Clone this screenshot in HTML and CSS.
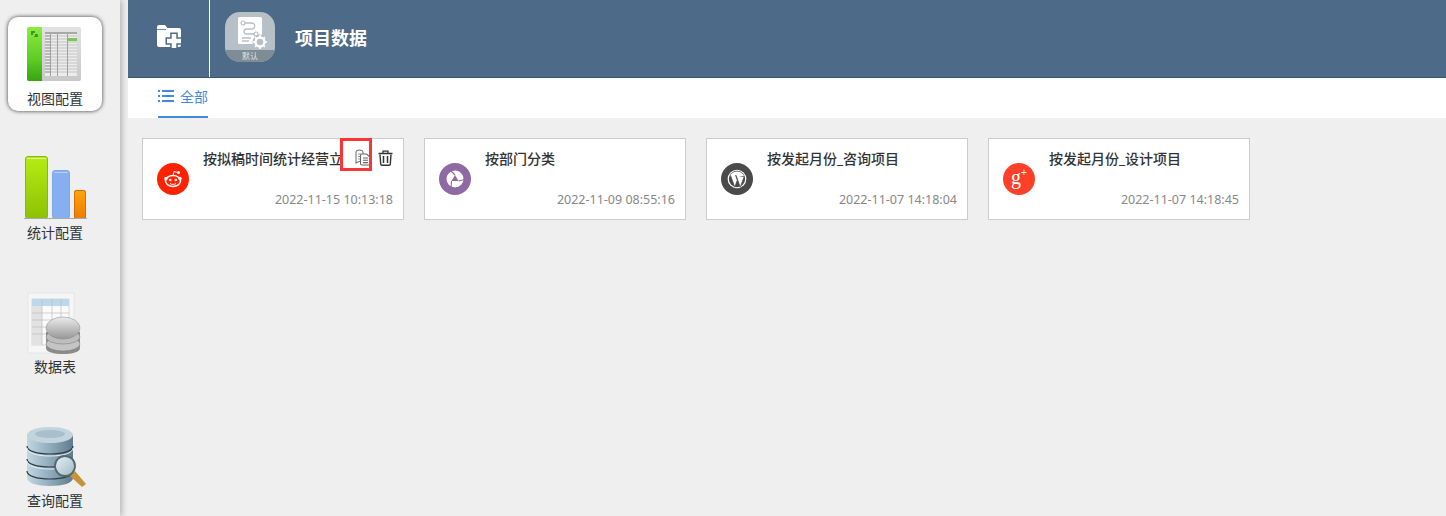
FILE: index.html
```html
<!DOCTYPE html>
<html lang="zh-CN">
<head>
  <meta charset="UTF-8" />
  <title>项目数据</title>
  <link rel="stylesheet" href="styles.css">
</head>
<body>
  <div class="app">
    <!-- Sidebar -->
    <nav class="sidebar">
      <div class="nav-item active">
        <svg class="nav-icon" viewBox="0 0 56 56">
          <defs>
            <linearGradient id="viewGreen" x1="0" y1="0" x2="0" y2="1">
              <stop offset="0" stop-color="#8ceb40"/>
              <stop offset="0.600" stop-color="#5fcb26"/>
              <stop offset="1" stop-color="#35a512"/>
            </linearGradient>
            <linearGradient id="viewGrey" x1="0" y1="0" x2="0" y2="1">
              <stop offset="0" stop-color="#e2e2e2"/>
              <stop offset="1" stop-color="#c8c8c8"/>
            </linearGradient>
          </defs>
          <rect x="0" y="0" width="54" height="54" rx="2" fill="url(#viewGrey)"/>
          <path d="M2 0h13v54H2a2 2 0 0 1-2-2V2a2 2 0 0 1 2-2z" fill="url(#viewGreen)"/>
          <path d="M4 4h4v2H6v2H4zM10 7H8v2H7v1h4V8z" fill="#3b9a1c"/>
          <rect x="18" y="5" width="32" height="44" fill="#ececec"/>
          <path d="M18 9h32M18 12h32M18 15h32M18 18h32M18 21h32M18 24h32M18 27h32M18 30h32M18 33h32M18 36h32M18 39h32M18 42h32M18 45h32" stroke="#c2c2c2" stroke-width="1"/>
          <path d="M18 9h5M18 12h5M18 15h5M18 18h5M18 21h5M18 24h5M18 27h5M18 30h5M18 33h5M18 36h5M18 39h5M18 42h5M18 45h5" stroke="#9c9c9c" stroke-width="1"/>
          <path d="M23.500 5v44M30.500 5v44M40.500 5v44" stroke="#a0a0a0" stroke-width="1"/>
          <rect x="41" y="11" width="9" height="3" fill="#7cc653"/>
          <rect x="18" y="5" width="32" height="2" fill="#a8a8a8"/>
        </svg>
        <span class="nav-label">视图配置</span>
      </div>

      <div class="nav-item">
        <svg class="nav-icon" viewBox="0 0 66 63">
          <defs>
            <linearGradient id="barGreen" x1="0" y1="0" x2="0" y2="1">
              <stop offset="0" stop-color="#b6ec12"/>
              <stop offset="1" stop-color="#8cc204"/>
            </linearGradient>
            <linearGradient id="barOrange" x1="0" y1="0" x2="0" y2="1">
              <stop offset="0" stop-color="#fca40c"/>
              <stop offset="1" stop-color="#ee7c00"/>
            </linearGradient>
          </defs>
          <rect x="3.500" y="0.500" width="22" height="62" rx="2.500" fill="url(#barGreen)" stroke="#86b81a"/>
          <path d="M5 2.500h19" stroke="#d8f58a" stroke-width="1"/>
          <rect x="30.500" y="14.500" width="17" height="48" rx="2.500" fill="#86aff0" stroke="#7ea8ec"/>
          <path d="M32 16.500h14" stroke="#b5cff7" stroke-width="1"/>
          <rect x="52.500" y="34.500" width="11" height="28" rx="1.500" fill="url(#barOrange)" stroke="#d66f06"/>
          <rect x="2" y="62" width="63" height="1" fill="#aaa"/>
        </svg>
        <span class="nav-label">统计配置</span>
      </div>

      <div class="nav-item">
        <svg class="nav-icon" viewBox="0 0 56 62">
          <defs>
            <linearGradient id="diskGrey" x1="0" y1="0" x2="0" y2="1">
              <stop offset="0" stop-color="#ececec"/>
              <stop offset="1" stop-color="#979797"/>
            </linearGradient>
          </defs>
          <rect x="1" y="1" width="46" height="60" fill="#f6f6f6" stroke="#e6e6e6"/>
          <rect x="5" y="7" width="37" height="46" fill="#fafafa" stroke="#bbb" stroke-width="0.500"/>
          <rect x="5" y="7" width="37" height="7" fill="#bcd9ec"/>
          <rect x="5" y="14" width="10" height="39" fill="#e2e2e2"/>
          <path d="M5 21h37M5 28h37M5 35h37M5 42h37M15 7v46M25 7v46M34 7v46" stroke="#bdbdbd" stroke-width="0.700"/>
          <path d="M19 40h34v16c0 4-8 6-17 6s-17-2-17-6z" fill="#8b8b8b"/>
          <ellipse cx="36" cy="52" rx="17" ry="7" fill="#c4c4c4" stroke="#777" stroke-width="0.500"/>
          <ellipse cx="36" cy="45" rx="17" ry="7" fill="#bdbdbd" stroke="#777" stroke-width="0.500"/>
          <ellipse cx="36" cy="36" rx="17" ry="11" fill="url(#diskGrey)" stroke="#888" stroke-width="0.500"/>
        </svg>
        <span class="nav-label">数据表</span>
      </div>

      <div class="nav-item">
        <svg class="nav-icon" viewBox="0 0 62 62">
          <defs>
            <linearGradient id="dbBlue" x1="0" y1="0" x2="1" y2="0">
              <stop offset="0" stop-color="#c3d7e1"/>
              <stop offset="0.500" stop-color="#8fabbc"/>
              <stop offset="1" stop-color="#5f7b8c"/>
            </linearGradient>
            <linearGradient id="lensBlue" x1="0" y1="0" x2="1" y2="1">
              <stop offset="0" stop-color="#e8f2f5"/>
              <stop offset="1" stop-color="#9db8c4"/>
            </linearGradient>
          </defs>
          <path d="M1 9v43c0 5 10 8 23 8s23-3 23-8V9z" fill="url(#dbBlue)"/>
          <path d="M1 20c0 5 10 8 23 8s23-3 23-8M1 33c0 5 10 8 23 8s23-3 23-8M1 45c0 5 10 8 23 8s23-3 23-8" fill="none" stroke="#2f3d45" stroke-width="1.200"/>
          <path d="M1 22c0 5 10 8 23 8s23-3 23-8M1 35c0 5 10 8 23 8s23-3 23-8" fill="none" stroke="#e4eef3" stroke-width="1"/>
          <ellipse cx="24" cy="9" rx="23" ry="8" fill="#c2d4de"/>
          <ellipse cx="24" cy="8" rx="15" ry="4" fill="#a9bfcb"/>
          <path d="M44 50l12 11 4-3-11-13z" fill="#c8923a"/>
          <circle cx="39" cy="40" r="10" fill="url(#lensBlue)" stroke="#55666f" stroke-width="1.800"/>
        </svg>
        <span class="nav-label">查询配置</span>
      </div>
    </nav>

    <div class="main">
      <!-- Header -->
      <header class="top-bar">
        <div class="add-box">
          <svg width="26" height="25" viewBox="0 0 26 25">
            <path d="M3 0h6l2.500 3H23a2 2 0 0 1 2 2v15a2 2 0 0 1-2 2H3a2 2 0 0 1-2-2V2a2 2 0 0 1 2-2z" fill="#fff"/>
            <path d="M1 4.500h9" stroke="#4d6b88" stroke-width="0.800"/>
            <path d="M15.700 9h4.600v4.700H25v4.600h-4.700V23h-4.600v-4.700H11v-4.600h4.700z" fill="#fff" stroke="#4d6b88" stroke-width="3" paint-order="stroke"/>
          </svg>
        </div>
        <div class="project-logo">
          <svg class="doc-icon" width="36" height="34" viewBox="0 0 36 34">
            <rect x="4" y="0" width="24" height="27" rx="1.500" fill="#fff"/>
            <path d="M9 6h8c5 0 5 6 0 6h-4c-4 0-4 5 0 5h8" fill="none" stroke="#b7c0c6" stroke-width="1.300"/>
            <circle cx="9" cy="6" r="2" fill="#fff" stroke="#b7c0c6" stroke-width="1.200"/>
            <circle cx="22" cy="17" r="2" fill="#fff" stroke="#b7c0c6" stroke-width="1.200"/>
            <path d="M8 21h9M8 24h7" stroke="#b7c0c6" stroke-width="1.300"/>
            <circle cx="26" cy="25" r="7.500" fill="#b7c0c6"/>
            <circle cx="26" cy="25" r="4.500" fill="none" stroke="#fff" stroke-width="2.400"/>
            <path d="M26 18v3M26 29v3M19 25h3M30 25h3M21 20l2 2M29 28l2 2M31 20l-2 2M23 28l-2 2" stroke="#fff" stroke-width="1.600"/>
          </svg>
          <span class="logo-tag">默认</span>
        </div>
        <h1 class="project-title">项目数据</h1>
      </header>

      <!-- Tabs -->
      <div class="tabs">
        <div class="tab active">
          <svg width="16" height="12" viewBox="0 0 16 12">
            <path d="M0 0h2v2H0zM0 5h2v2H0zM0 10h2v2H0z" fill="#3f8be0"/>
            <path d="M4 0h12v2H4zM4 5h12v2H4zM4 10h12v2H4z" fill="#3f8be0"/>
          </svg>
          <span>全部</span>
        </div>
      </div>

      <!-- Cards -->
      <div class="card-list">
        <div class="card">
          <span class="card-icon red">
            <svg width="20" height="20" viewBox="0 0 20 20">
              <ellipse cx="10" cy="12" rx="7.500" ry="5.500" fill="none" stroke="#fff" stroke-width="1.500"/>
              <circle cx="3" cy="9.500" r="1.700" fill="#fff"/>
              <circle cx="17" cy="9.500" r="1.700" fill="#fff"/>
              <circle cx="7.200" cy="11" r="1.300" fill="#fff"/>
              <circle cx="12.800" cy="11" r="1.300" fill="#fff"/>
              <path d="M7 14.500c2 1.300 4 1.300 6 0" fill="none" stroke="#fff" stroke-width="1"/>
              <path d="M10 6.500l1-4 3.500 1" fill="none" stroke="#fff" stroke-width="1"/>
              <circle cx="15.500" cy="3.500" r="1.500" fill="#fff"/>
            </svg>
          </span>
          <div class="card-body">
            <div class="card-title">按拟稿时间统计经营立</div>
            <div class="card-date">2022-11-15 10:13:18</div>
          </div>
          <div class="card-actions">
            <svg class="copy-icon" width="16" height="17" viewBox="0 0 16 17">
              <path d="M1 3.500C1 2 2.200 1 4.500 1S8 2 8 3.500V12c-2.500 0-5 .5-7 2z" fill="#fff" stroke="#777" stroke-width="1.100"/>
              <path d="M3 5h3M3 7.500h3M3 10h3" stroke="#999" stroke-width="1"/>
              <path d="M7 5h4.500L15 8v8H7c-1 0-1.500-.5-1.500-1.500v-8C5.500 5.500 6 5 7 5z" fill="#fff" stroke="#666" stroke-width="1.100"/>
              <path d="M8 9h5M8 11.300h5M8 13.600h5" stroke="#666" stroke-width="1.100"/>
            </svg>
            <svg class="trash-icon" width="15" height="16" viewBox="0 0 15 16">
              <path d="M2 4.500l.7 9.500c0 .8.600 1.300 1.300 1.300h7c.7 0 1.300-.5 1.300-1.300l.7-9.500" fill="none" stroke="#333" stroke-width="1.400"/>
              <path d="M0.500 3.500h14" stroke="#333" stroke-width="1.500"/>
              <path d="M5 3V1.200h5V3" fill="none" stroke="#333" stroke-width="1.300"/>
              <path d="M5.500 6v7M9.500 6v7" stroke="#333" stroke-width="1.500"/>
            </svg>
          </div>
          <span class="mark-box"></span>
        </div>

        <div class="card">
          <span class="card-icon purple">
            <svg width="20" height="20" viewBox="0 0 20 20">
              <circle cx="10" cy="10" r="8.500" fill="#fff"/>
              <path d="M10 6l3.500 6h-7z" fill="#8e69a4"/>
              <path d="M10 6L5.500 1.500M13.500 12l6-1.500M6.500 12l-.5 7" stroke="#8e69a4" stroke-width="1.100" fill="none"/>
            </svg>
          </span>
          <div class="card-body">
            <div class="card-title">按部门分类</div>
            <div class="card-date">2022-11-09 08:55:16</div>
          </div>
        </div>

        <div class="card">
          <span class="card-icon dark">
            <svg width="22" height="22" viewBox="0 0 20 20">
              <circle cx="10" cy="10" r="8.500" fill="#fff"/>
              <circle cx="10" cy="10" r="7.400" fill="#4a4a4a"/>
              <path d="M3.500 7.500h13a7 7 0 0 0-13 0z" fill="#fff"/>
              <path d="M4 6.500l4 11 2.300-6.500-1.600-4.500M9 6.500l4 11 3.300-9" fill="#fff" stroke="#4a4a4a" stroke-width="0.700"/>
            </svg>
          </span>
          <div class="card-body">
            <div class="card-title">按发起月份_咨询项目</div>
            <div class="card-date">2022-11-07 14:18:04</div>
          </div>
        </div>

        <div class="card">
          <span class="card-icon orange">
            <span class="gplus">g<sup>+</sup></span>
          </span>
          <div class="card-body">
            <div class="card-title">按发起月份_设计项目</div>
            <div class="card-date">2022-11-07 14:18:45</div>
          </div>
        </div>
      </div>
    </div>
  </div>
</body>
</html>
```

FILE: styles.css
```css
:root {
  --header: #4d6b88;
  --bg: #efefef;
  --text: #333;
  --subtext: #888;
  --highlight: #3f8be0;
}

html, body {
  height: 100%;
  margin: 0;
  padding: 0;
  background: var(--bg);
  color: var(--text);
}

body {
  font-family: "Noto Sans", "Noto Sans CJK SC", sans-serif;
  overflow: hidden;
}

.app {
  display: flex;
  height: 100vh;
  overflow: hidden;
}

.sidebar {
  width: 120px;
  flex-shrink: 0;
  box-sizing: border-box;
  padding: 17px 0 0 8px;
  background: var(--bg);
  box-shadow: 2px 0 6px rgba(0, 0, 0, 0.25);
  display: flex;
  flex-direction: column;
  gap: 40px;
  position: relative;
  z-index: 2;
}

.nav-item {
  width: 94px;
  height: 94px;
  flex-shrink: 0;
  box-sizing: border-box;
  padding-top: 10px;
  display: flex;
  flex-direction: column;
  align-items: center;
  border-radius: 10px;
}

.nav-item.active {
  background: #fff;
  box-shadow: 0 0 4px rgba(0, 0, 0, 0.75);
}

.nav-icon {
  height: 56px;
  width: 56px;
  flex-shrink: 0;
}

.nav-item:nth-child(2) .nav-icon {
  width: 66px;
  height: 63px;
  margin-top: -5px;
  margin-bottom: -2px;
}

.nav-item:nth-child(3) .nav-icon {
  height: 62px;
  margin-top: -3px;
  margin-bottom: -3px;
}

.nav-item:nth-child(4) .nav-icon {
  width: 62px;
  height: 62px;
  margin-top: -3px;
  margin-bottom: -3px;
  margin-left: 4px;
}

.nav-label {
  font-size: 14px;
  line-height: 18px;
  margin-top: 7px;
  color: #333;
}

.main {
  flex: 1;
  min-width: 0;
  margin-left: 8px;
  display: flex;
  flex-direction: column;
}

.top-bar {
  height: 77px;
  flex-shrink: 0;
  display: flex;
  align-items: center;
  background: var(--header);
  border-bottom: 1px solid #3e566e;
}

.add-box {
  width: 82px;
  height: 77px;
  box-sizing: border-box;
  padding-bottom: 3px;
  display: flex;
  align-items: center;
  justify-content: center;
  border-right: 1px solid #fff;
}

.project-logo {
  width: 50px;
  height: 50px;
  margin: 0 0 4px 15px;
  border-radius: 15px;
  background: #b7c0c6;
  overflow: hidden;
  display: flex;
  flex-direction: column;
  align-items: center;
}

.doc-icon {
  margin-top: 5px;
  margin-left: 4px;
  flex-shrink: 0;
}

.logo-tag {
  width: 100%;
  margin-top: -1px;
  flex: 1;
  background: #7e8c96;
  color: #dfe4e7;
  font-size: 8px;
  line-height: 12px;
  text-align: center;
}

.project-title {
  margin: 0 0 4px 20px;
  color: #fff;
  font-size: 18px;
  font-weight: 700;
}

.tabs {
  height: 40px;
  flex-shrink: 0;
  padding-left: 30px;
  background: #fff;
  display: flex;
}

.tab {
  display: flex;
  align-items: center;
  gap: 6px;
  box-sizing: border-box;
  width: 50px;
  padding-bottom: 3px;
  font-size: 14px;
  color: var(--highlight);
  border-bottom: 2px solid var(--highlight);
  white-space: nowrap;
}

.card-list {
  display: flex;
  gap: 20px;
  padding: 20px 14px;
}

.card {
  position: relative;
  width: 262px;
  height: 82px;
  box-sizing: border-box;
  padding: 0 10px 0 14px;
  display: flex;
  background: #fff;
  border: 1px solid #ccc;
}

.card-icon {
  width: 32px;
  height: 32px;
  flex-shrink: 0;
  margin-top: 24px;
  border-radius: 50%;
  display: flex;
  align-items: center;
  justify-content: center;
}

.card-icon.red { background: #ff2200; }
.card-icon.purple { background: #8e69a4; }
.card-icon.dark { background: #4a4a4a; }
.card-icon.orange { background: #ff4028; }

.gplus {
  color: #fff;
  font-family: "Liberation Serif", serif;
  font-size: 20px;
  line-height: 24px;
  margin-top: -4px;
}

.gplus sup {
  font-family: "Liberation Sans", sans-serif;
  font-size: 10px;
  line-height: 0;
}

.card-body {
  flex: 1;
  min-width: 0;
  margin-left: 14px;
  display: flex;
  flex-direction: column;
  justify-content: space-between;
  padding: 10px 0 11px;
}

.card-title {
  font-size: 14px;
  line-height: 19px;
  font-weight: 500;
  white-space: nowrap;
}

.card-date {
  font-size: 12.500px;
  line-height: 16px;
  color: var(--subtext);
  text-align: right;
}

.card-actions {
  position: absolute;
  top: 10px;
  right: 10px;
  display: flex;
  align-items: center;
  gap: 7px;
}

.mark-box {
  position: absolute;
  left: 197px;
  top: -1px;
  width: 32px;
  height: 33px;
  box-sizing: border-box;
  border: 3px solid #fb3535;
}
```
